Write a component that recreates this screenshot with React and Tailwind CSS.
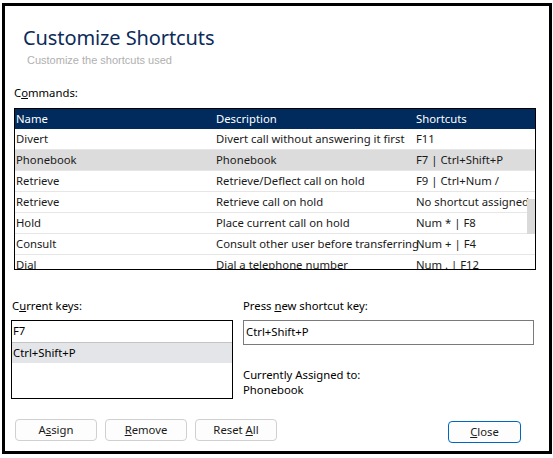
import React from "react";

const rows = [
  ["Divert", "Divert call without answering it first", "F11"],
  ["Phonebook", "Phonebook", "F7 | Ctrl+Shift+P", true],
  ["Retrieve", "Retrieve/Deflect call on hold", "F9 | Ctrl+Num /"],
  ["Retrieve", "Retrieve call on hold", "No shortcut assigned"],
  ["Hold", "Place current call on hold", "Num * | F8"],
  ["Consult", "Consult other user before transferring", "Num + | F4"],
  ["Dial", "Dial a telephone number", "Num . | F12"],
];

const ui = { fontFamily: '"Noto Sans", "Open Sans", sans-serif' };

function Btn({ children, primary }) {
  return (
    <button
      className={
        primary
          ? "h-[22px] w-[73px] rounded-[4px] border border-[#0067c0] bg-[#fdfdfd] text-[11.3px] text-[#1a1a1a]"
          : "h-[22px] w-[82px] rounded-[4px] border border-[#d0d0d0] bg-[#fdfdfd] text-[11.3px] text-[#1a1a1a]"
      }
      style={ui}
    >
      {children}
    </button>
  );
}

export default function App() {
  return (
    <div className="h-[458px] w-[553px] bg-white pl-[2px] pt-[3px]" style={ui}>
      <div className="flex h-[451px] w-[550px] flex-col border-[3px] border-black">
        <div className="pl-[18px] pt-[18px] text-[20px] leading-[27px] tracking-[-0.1px] text-[#0d2b5a]">
          Customize Shortcuts
        </div>
        <div
          className="pl-[22px] pt-[2px] text-[11px] leading-[14px] text-[#b0b0b0]"
          style={{ fontFamily: '"Liberation Sans", Arial, sans-serif' }}
        >
          Customize the shortcuts used
        </div>
        <div className="pl-[9px] pt-[18px] text-[11.3px] leading-[16px] text-black">
          C<span className="underline">o</span>mmands:
        </div>
        <div className="relative ml-[9px] mt-[7px] h-[162px] w-[522px] overflow-hidden border border-black">
          <div className="flex h-[20px] items-center bg-[#002b5c] text-[11.3px] text-white">
            <div className="w-[200px] pl-[1px]">Name</div>
            <div className="w-[200px] pl-[1px]">Description</div>
            <div className="flex-1 pl-[1px]">Shortcuts</div>
          </div>
          {rows.map(([n, d, s, sel], i) => (
            <div
              key={i}
              className={
                "flex h-[21px] items-center border-b border-[#e6e6e6] text-[11.3px] text-[#1a1a1a] " +
                (sel ? "bg-[#dcdcdc]" : "bg-white")
              }
            >
              <div className="w-[200px] whitespace-nowrap pl-[1px]">{n}</div>
              <div className="w-[200px] whitespace-nowrap pl-[1px]">{d}</div>
              <div className="flex-1 overflow-hidden whitespace-nowrap pl-[1px]">{s}</div>
            </div>
          ))}
          <div className="absolute right-0 top-[90px] h-[35px] w-[8px] bg-[#dadada]" />
        </div>

        <div className="mt-[28px] flex">
          <div className="ml-[6px] w-[222px]">
            <div className="pl-[1px] text-[11.3px] leading-[16px] text-black">
              C<span className="underline">u</span>rrent keys:
            </div>
            <div className="mt-[6px] h-[79px] border border-black text-[11.3px] text-black">
              <div className="flex h-[21px] items-center pl-[1px]">F7</div>
              <div className="flex h-[21px] items-center border-t border-[#c4c4c4] bg-[#e3e5e9] pl-[1px]">
                Ctrl+Shift+P
              </div>
            </div>
          </div>
          <div className="ml-[10px] w-[291px]">
            <div className="text-[11.3px] leading-[16px] text-black">
              Press <span className="underline">n</span>ew shortcut key:
            </div>
            <div className="mt-[6px] flex h-[25px] items-center border border-[#7a7a7a] pl-[2px] text-[11.3px] text-black">
              Ctrl+Shift+P
            </div>
            <div className="mt-[22px] text-[11.3px] leading-[15px] text-black">
              Currently Assigned to:
              <br />
              Phonebook
            </div>
          </div>
        </div>

        <div className="mt-auto mb-[8px] flex items-center pl-[10px] pr-[28px]">
          <div className="flex gap-[8px]">
            <Btn>
              A<span className="underline">s</span>sign
            </Btn>
            <Btn>
              <span className="underline">R</span>emove
            </Btn>
            <Btn>
              Reset <span className="underline">A</span>ll
            </Btn>
          </div>
          <div className="ml-auto">
            <Btn primary>
              <span className="underline">C</span>lose
            </Btn>
          </div>
        </div>
      </div>
    </div>
  );
}
